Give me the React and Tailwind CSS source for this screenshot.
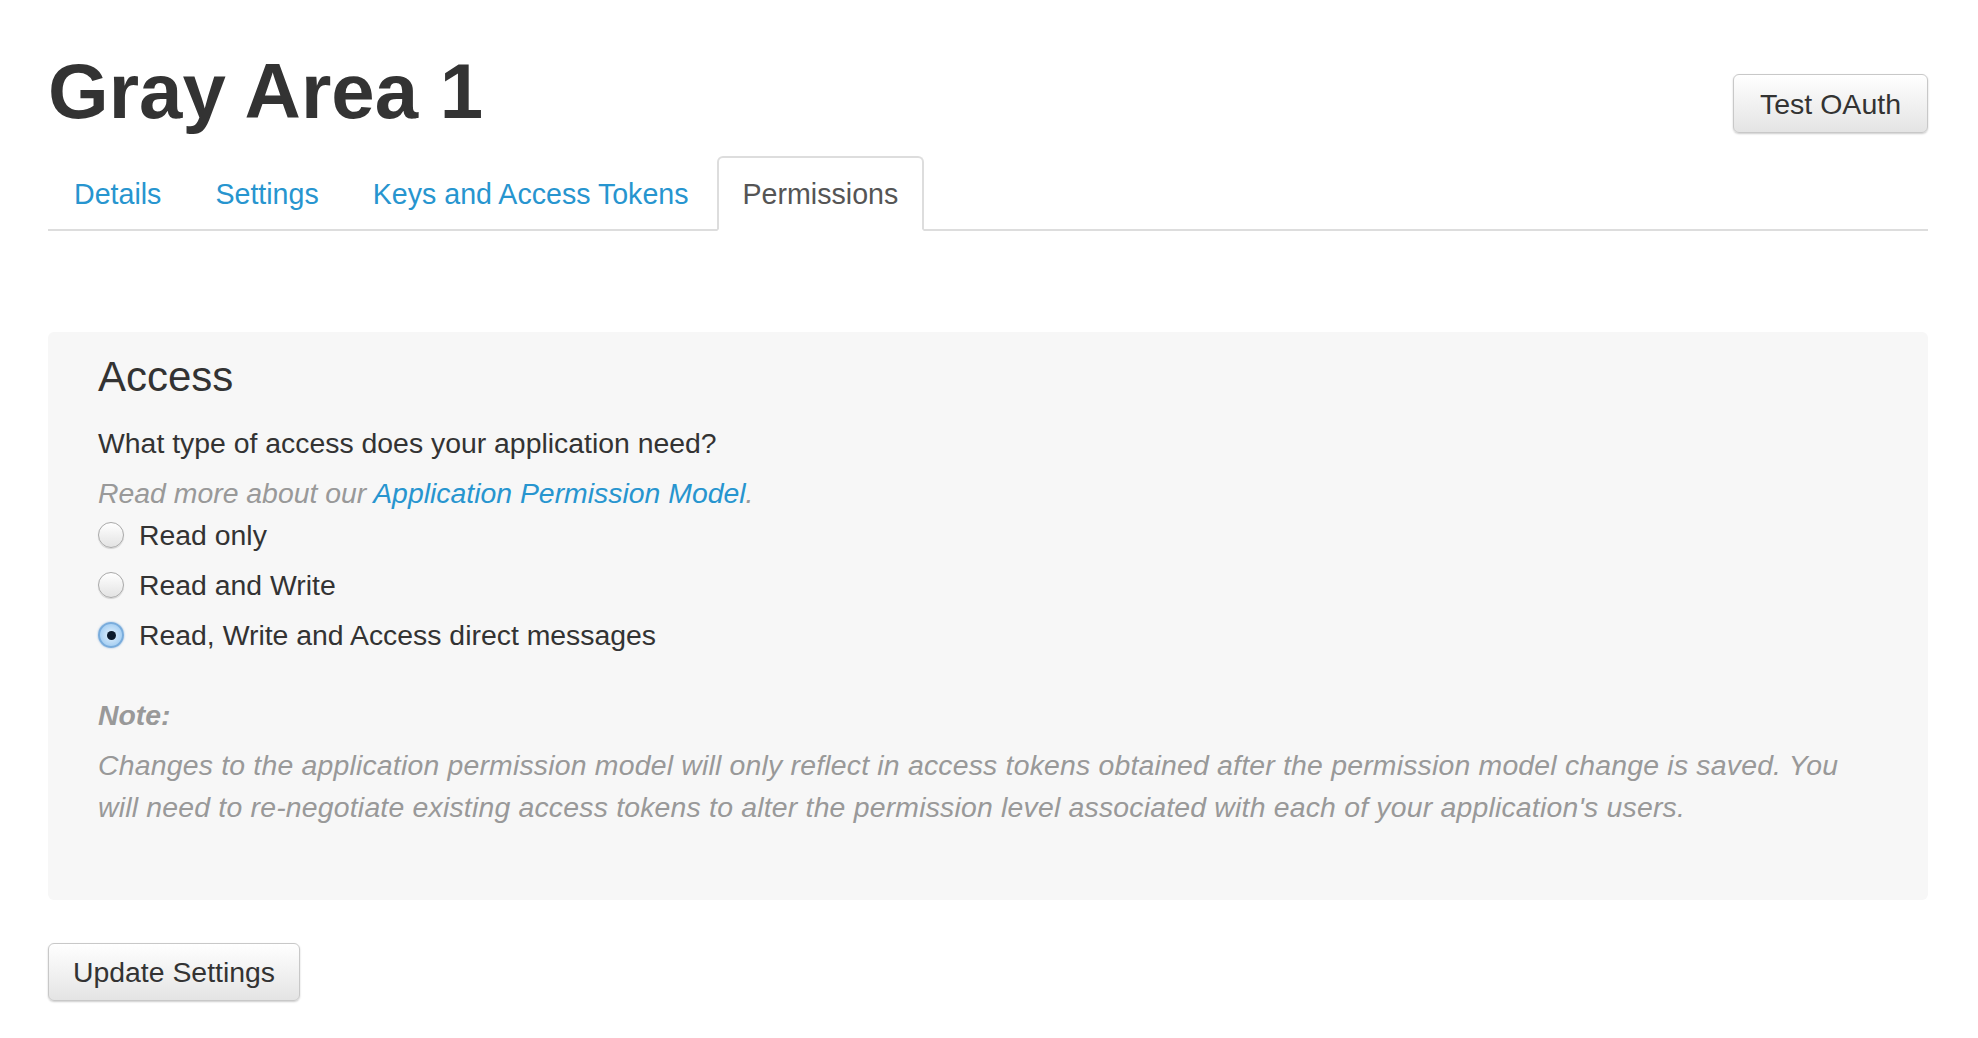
import { useState } from "react";

const tabs = ["Details", "Settings", "Keys and Access Tokens", "Permissions"];

const options = [
  "Read only",
  "Read and Write",
  "Read, Write and Access direct messages",
];

// Aqua style radio, drawn with plain divs
function Radio({ checked }) {
  if (checked) {
    return (
      <span className="flex h-[26px] w-[26px] shrink-0 items-center justify-center rounded-full border-2 border-[#79acdc] bg-radial from-[#e4f2fd] to-[#8fc2ee] shadow-[0_0_2px_rgba(60,130,200,0.6)]">
        <span className="h-[9px] w-[9px] rounded-full bg-[#0b1a2c]" />
      </span>
    );
  }
  return (
    <span className="h-[26px] w-[26px] shrink-0 rounded-full border border-[#a9a9a9] bg-linear-to-b from-white to-[#e3e3e3] shadow-[0_1px_1px_rgba(0,0,0,0.15)]" />
  );
}

export default function App() {
  const [access, setAccess] = useState(2);
  const [active, setActive] = useState(3);

  return (
    <div className="min-h-[1038px] bg-white font-['Liberation_Sans',Arial,sans-serif] text-[#333]">
      <div className="ml-[48px] w-[1880px]">
        {/* Header */}
        <div className="flex items-start justify-between pt-[48px]">
          <h1 className="text-[78px] font-bold leading-[86px] text-[#333]">
            Gray Area 1
          </h1>
          <button className="mt-[26px] h-[59px] rounded-[6px] border border-[#c8c8c8] bg-linear-to-b from-white to-[#e4e4e4] px-[26px] text-[28.5px] leading-[40px] text-[#333] shadow-[0_1px_2px_rgba(0,0,0,0.2)]">
            Test OAuth
          </button>
        </div>

        {/* Tabs */}
        <ul className="mt-[22px] flex border-b-2 border-[#ddd]">
          {tabs.map((tab, i) => (
            <li key={tab} className="-mb-[2px] mr-[2px]">
              <button
                onClick={() => setActive(i)}
                className={`flex h-[75px] items-center rounded-t-[6px] border-2 px-[24px] text-[28.6px] leading-[40px] ${
                  i === active
                    ? "border-[#ddd] border-b-white bg-white text-[#555]"
                    : "border-transparent text-[#2795cf]"
                }`}
              >
                {tab}
              </button>
            </li>
          ))}
        </ul>

        {/* Access panel */}
        <div className="mt-[101px] rounded-[6px] bg-[#f7f7f7] px-[50px] pb-[72px] pt-[23px] text-[28.4px]">
          <h2 className="text-[42px] leading-[44px] text-[#333]">Access</h2>
          <p className="mt-[24px] leading-[40px]">
            What type of access does your application need?
          </p>
          <p className="mt-[10px] italic leading-[40px] text-[#999]">
            Read more about our{" "}
            <a href="#" className="text-[#2795cf]">
              Application Permission Model
            </a>
            .
          </p>
          <div className="mt-[2px] flex flex-col gap-[10px]">
            {options.map((opt, i) => (
              <label
                key={opt}
                onClick={() => setAccess(i)}
                className="flex h-[40px] cursor-pointer items-center gap-[15px] leading-[40px]"
              >
                <Radio checked={access === i} />
                <span>{opt}</span>
              </label>
            ))}
          </div>
          <p className="mt-[40px] font-bold italic leading-[40px] text-[#999]">
            Note:
          </p>
          <p className="mt-[9px] italic leading-[42px] tracking-[0.2px] text-[#999]">
            Changes to the application permission model will only reflect in
            access tokens obtained after the permission model change is saved.
            You will need to re-negotiate existing access tokens to alter the
            permission level associated with each of your application's users.
          </p>
        </div>

        <button className="mt-[43px] h-[58px] rounded-[6px] border border-[#c8c8c8] bg-linear-to-b from-white to-[#e4e4e4] px-[24px] text-[28.4px] leading-[40px] text-[#333] shadow-[0_1px_2px_rgba(0,0,0,0.2)]">
          Update Settings
        </button>
      </div>
    </div>
  );
}
